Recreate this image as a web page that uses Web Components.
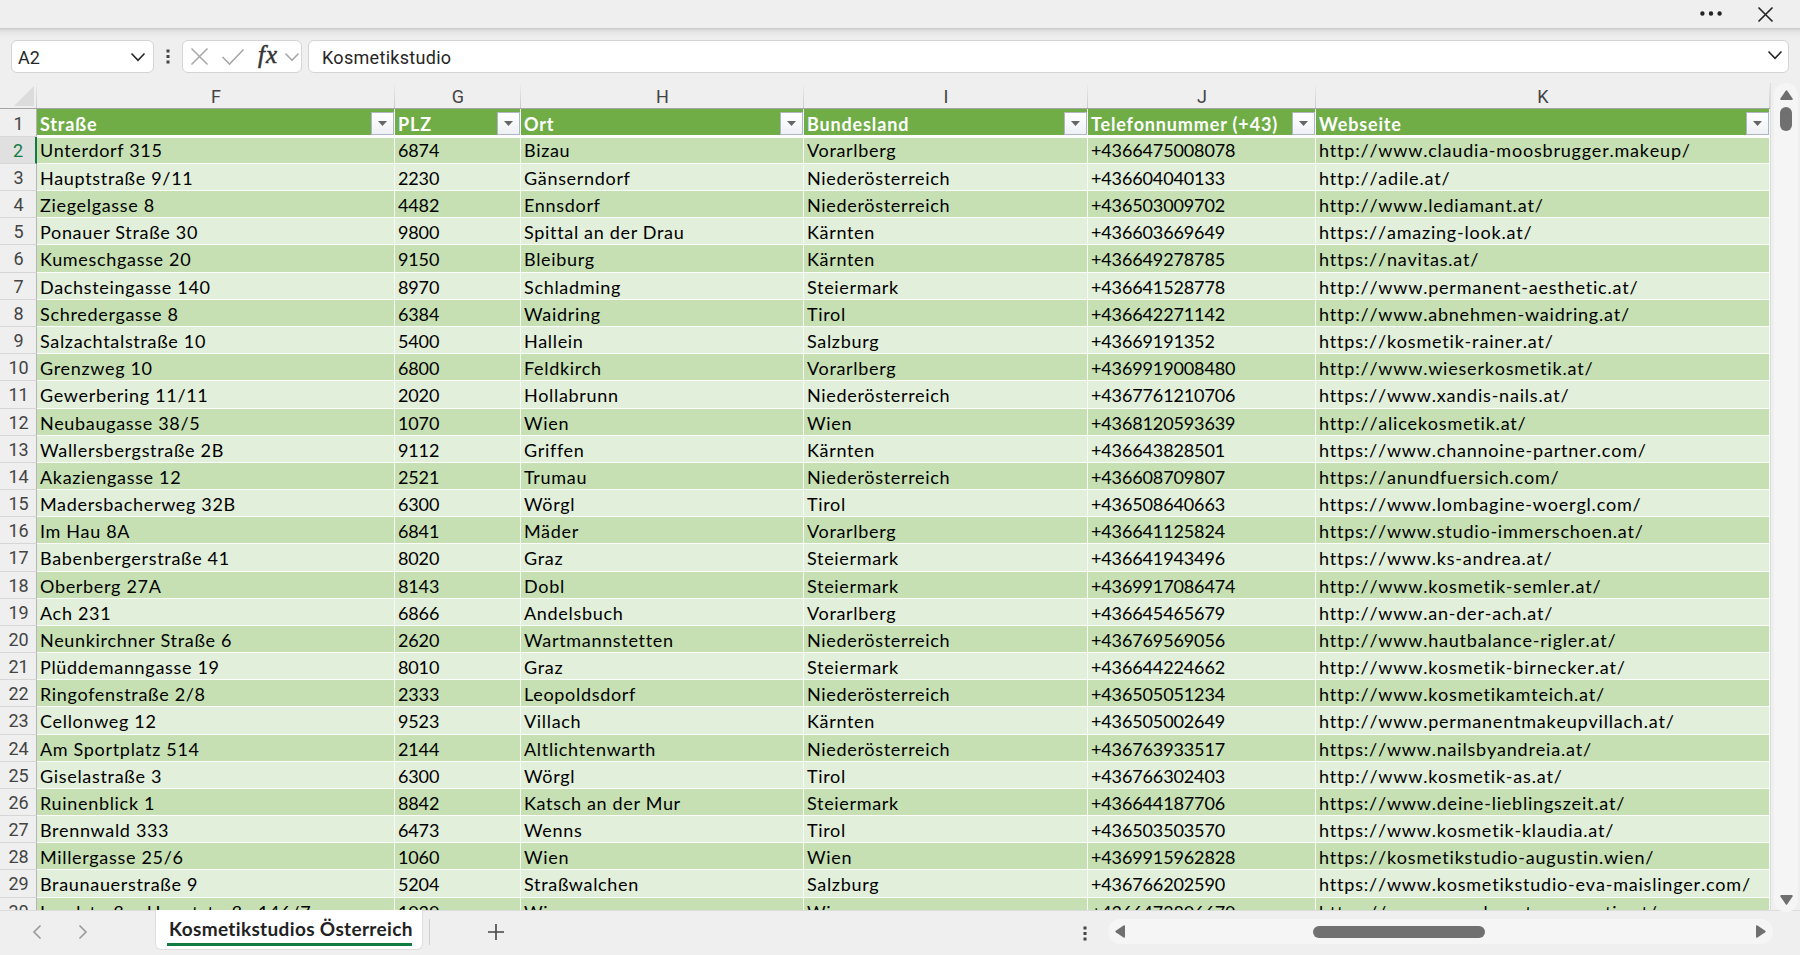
<!DOCTYPE html>
<html lang="de">
<head>
<meta charset="utf-8">
<title>Kosmetikstudios Österreich</title>
<style>
  body {
    margin: 0;
    height: 955px;
    overflow: hidden;
    background: #efefef;
  }
</style>
</head>
<body>
<sheet-app></sheet-app>

<script>
const COLUMNS = [
  { letter: 'F', title: 'Straße' },
  { letter: 'G', title: 'PLZ' },
  { letter: 'H', title: 'Ort' },
  { letter: 'I', title: 'Bundesland' },
  { letter: 'J', title: 'Telefonnummer (+43)' },
  { letter: 'K', title: 'Webseite' },
];

const ROWS = `
Unterdorf 315|6874|Bizau|Vorarlberg|+4366475008078|http://www.claudia-moosbrugger.makeup/
Hauptstraße 9/11|2230|Gänserndorf|Niederösterreich|+436604040133|http://adile.at/
Ziegelgasse 8|4482|Ennsdorf|Niederösterreich|+436503009702|http://www.lediamant.at/
Ponauer Straße 30|9800|Spittal an der Drau|Kärnten|+436603669649|https://amazing-look.at/
Kumeschgasse 20|9150|Bleiburg|Kärnten|+436649278785|https://navitas.at/
Dachsteingasse 140|8970|Schladming|Steiermark|+436641528778|http://www.permanent-aesthetic.at/
Schredergasse 8|6384|Waidring|Tirol|+436642271142|http://www.abnehmen-waidring.at/
Salzachtalstraße 10|5400|Hallein|Salzburg|+43669191352|https://kosmetik-rainer.at/
Grenzweg 10|6800|Feldkirch|Vorarlberg|+4369919008480|http://www.wieserkosmetik.at/
Gewerbering 11/11|2020|Hollabrunn|Niederösterreich|+4367761210706|https://www.xandis-nails.at/
Neubaugasse 38/5|1070|Wien|Wien|+4368120593639|http://alicekosmetik.at/
Wallersbergstraße 2B|9112|Griffen|Kärnten|+436643828501|https://www.channoine-partner.com/
Akaziengasse 12|2521|Trumau|Niederösterreich|+436608709807|https://anundfuersich.com/
Madersbacherweg 32B|6300|Wörgl|Tirol|+436508640663|https://www.lombagine-woergl.com/
Im Hau 8A|6841|Mäder|Vorarlberg|+436641125824|https://www.studio-immerschoen.at/
Babenbergerstraße 41|8020|Graz|Steiermark|+436641943496|https://www.ks-andrea.at/
Oberberg 27A|8143|Dobl|Steiermark|+4369917086474|http://www.kosmetik-semler.at/
Ach 231|6866|Andelsbuch|Vorarlberg|+436645465679|http://www.an-der-ach.at/
Neunkirchner Straße 6|2620|Wartmannstetten|Niederösterreich|+436769569056|http://www.hautbalance-rigler.at/
Plüddemanngasse 19|8010|Graz|Steiermark|+436644224662|http://www.kosmetik-birnecker.at/
Ringofenstraße 2/8|2333|Leopoldsdorf|Niederösterreich|+436505051234|http://www.kosmetikamteich.at/
Cellonweg 12|9523|Villach|Kärnten|+436505002649|http://www.permanentmakeupvillach.at/
Am Sportplatz 514|2144|Altlichtenwarth|Niederösterreich|+436763933517|https://www.nailsbyandreia.at/
Giselastraße 3|6300|Wörgl|Tirol|+436766302403|http://www.kosmetik-as.at/
Ruinenblick 1|8842|Katsch an der Mur|Steiermark|+436644187706|https://www.deine-lieblingszeit.at/
Brennwald 333|6473|Wenns|Tirol|+436503503570|https://www.kosmetik-klaudia.at/
Millergasse 25/6|1060|Wien|Wien|+4369915962828|https://kosmetikstudio-augustin.wien/
Braunauerstraße 9|5204|Straßwalchen|Salzburg|+436766202590|https://www.kosmetikstudio-eva-maislinger.com/
Landstraßer Hauptstraße 146/7|1030|Wien|Wien|+4366473806670|https://www.pure-beauty-cosmetic.at/
`.trim().split('\n').map(line => line.split('|'));

// Stroke and fill icons, drawn in their own viewBox
const ICONS = {
  chevron: { w: 14, h: 8, d: 'M.5.5l6.500 6.800L13.500.5' },
  left: { w: 8, h: 14, d: 'M7.500.5L1 7l6.500 6.500' },
  right: { w: 8, h: 14, d: 'M.5.5L7 7 .5 13.500' },
  cancel: { w: 17, h: 17, d: 'M.5.5l16 16M16.500.5l-16 16' },
  check: { w: 22, h: 16, d: 'M.5 8l7 7L21.500.5' },
  close: { w: 15, h: 15, d: 'M.5.5l14 14M14.500.5l-14 14' },
  plus: { w: 16, h: 16, d: 'M8 0v16M0 8h16' },
  dotsH: { w: 22, h: 5, fill: true, d: 'M.2 2.500a2.200 2.200 0 104.400 0 2.200 2.200 0 10-4.400 0M8.800 2.500a2.200 2.200 0 104.400 0 2.200 2.200 0 10-4.400 0M17.400 2.500a2.200 2.200 0 104.400 0 2.200 2.200 0 10-4.400 0' },
  dotsV: { w: 4, h: 15, fill: true, d: 'M.5.5h3v3h-3zM.5 6h3v3h-3zM.5 11.500h3v3h-3z' },
  triUp: { w: 13, h: 10, fill: true, d: 'M5.700.8Q6.500-.2 7.300.8L12.600 8.500Q13 10 12 10H1Q0 10 .4 8.500z' },
  triDown: { w: 13, h: 10, fill: true, d: 'M5.700 9.200Q6.500 10.200 7.300 9.200L12.600 1.500Q13 0 12 0H1Q0 0 .4 1.500z' },
  triLeft: { w: 10, h: 13, fill: true, d: 'M.8 5.700Q-.2 6.500.8 7.300L8.500 12.600Q10 13 10 12V1Q10 0 8.500.4z' },
  triRight: { w: 10, h: 13, fill: true, d: 'M9.200 5.700Q10.200 6.500 9.200 7.300L1.500 12.600Q0 13 0 12V1Q0 0 1.500.4z' },
  filter: { w: 9, h: 5, fill: true, d: 'M0 0h9L4.500 5z' },
};

class SheetIcon extends HTMLElement {
  constructor() {
    super();
    this.attachShadow({ mode: 'open' });
  }

  connectedCallback() {
    const icon = ICONS[this.getAttribute('name')];
    const paint = icon.fill
      ? 'fill="currentColor"'
      : 'fill="none" stroke="currentColor" stroke-width="1.600"';
    this.shadowRoot.innerHTML = `
      <style>
        :host { display: block; flex: none; }
        svg { display: block; overflow: visible; }
      </style>
      <svg width="${icon.w}" height="${icon.h}" viewBox="0 0 ${icon.w} ${icon.h}"><path ${paint} d="${icon.d}"/></svg>
    `;
  }
}

const titleTemplate = document.createElement('template');
titleTemplate.innerHTML = `
  <style>
    :host {
      display: flex;
      box-sizing: border-box;
      height: 28px;
      justify-content: flex-end;
      align-items: center;
      gap: 36px;
      padding-right: 27px;
      color: #222;
    }
    .more { padding-bottom: 1px; }
  </style>
  <sheet-icon class="more" name="dotsH"></sheet-icon>
  <sheet-icon name="close"></sheet-icon>
`;

class TitleStrip extends HTMLElement {
  constructor() {
    super();
    this.attachShadow({ mode: 'open' });
    this.shadowRoot.appendChild(titleTemplate.content.cloneNode(true));
  }
}

const formulaTemplate = document.createElement('template');
formulaTemplate.innerHTML = `
  <style>
    :host {
      display: flex;
      box-sizing: border-box;
      height: 55px;
      padding: 11px 11px 11px 11px;
      border-top: 1px solid #cbcbcb;
      background: linear-gradient(#d4d4d4, #e6e6e6 3px, #efefef 9px);
      font: 18px Roboto, sans-serif;
      color: #262626;
    }
    .box {
      display: flex;
      box-sizing: border-box;
      height: 33px;
      align-items: center;
      border: 1px solid #d4d4d4;
      border-radius: 6px;
      background: #fff;
    }
    .name { width: 143px; padding: 0 8px 0 6px; justify-content: space-between; }
    .dots { align-self: center; margin: 0 12px 0 12px; color: #444; }
    .tools { width: 120px; padding-left: 8px; color: #a8a8a8; }
    .tools .check { margin-left: 14px; }
    .fx {
      margin-left: 14px;
      width: 22px;
      padding-bottom: 3px;
      font: italic 25px/28px "Liberation Serif", serif;
      -webkit-text-stroke: .5px #333;
      letter-spacing: 1px;
      color: #333;
    }
    .tools .more { margin-left: 5px; }
    .formula { flex: 1; margin-left: 6px; padding: 0 6px 0 13px; justify-content: space-between; }
    .formula .text { letter-spacing: .3px; }
    .formula sheet-icon { padding-bottom: 3px; }
    .name slot, .text { display: block; padding-top: 1px; }
  </style>
  <div class="box name"><slot name="cell"></slot><sheet-icon name="chevron"></sheet-icon></div>
  <sheet-icon class="dots" name="dotsV"></sheet-icon>
  <div class="box tools">
    <sheet-icon name="cancel"></sheet-icon>
    <sheet-icon class="check" name="check"></sheet-icon>
    <span class="fx">fx</span>
    <sheet-icon class="more" name="chevron"></sheet-icon>
  </div>
  <div class="box formula"><span class="text"><slot></slot></span><sheet-icon name="chevron"></sheet-icon></div>
`;

class FormulaBar extends HTMLElement {
  constructor() {
    super();
    this.attachShadow({ mode: 'open' });
    this.shadowRoot.appendChild(formulaTemplate.content.cloneNode(true));
  }
}

const gridTemplate = document.createElement('template');
gridTemplate.innerHTML = `
  <style>
    :host {
      display: block;
      height: 827px;
      overflow: hidden;
      font: 18px Lato, sans-serif;
      font-variant-ligatures: none;
      color: #000;
    }
    .row {
      display: grid;
      grid-template-columns: 37px 358px 126px 283px 284px 228px 454px;
      height: 27.18px;
      line-height: 28.200px;
      white-space: nowrap;
    }
    .row > div { box-sizing: border-box; overflow: hidden; }
    .letters { height: 26px; border-bottom: 1px solid #a5a5a5; box-sizing: border-box; font: 18px/28px Roboto, sans-serif; color: #444; text-align: center; }
    .letters > div {
      padding-left: 1px;
      border-right: 1px solid;
      border-image: linear-gradient(#efefef, #c8c8c8) 1;
    }
    .row > .corner { display: flex; justify-content: flex-end; align-items: flex-end; padding: 0 2px 2px 0; }
    .corner svg { display: block; }
    .num {
      padding-left: 1px;
      border-right: 1px solid #b5b5b5;
      border-bottom: 1px solid #d6d6d6;
      font-family: Roboto, sans-serif;
      font-size: 18px;
      color: #444;
      text-align: center;
    }
    .num.current { border-right: 2px solid #107c41; background: #e0e0e0; color: #107c41; }
    .cell {
      padding-left: 3px;
      border-right: 1px solid #f7fbf5;
      border-bottom: 1px solid #fbfdfa;
      background: #e2efda;
      letter-spacing: .68px;
    }
    .cell.number { letter-spacing: -.13px; }
    .cell.link { letter-spacing: .79px; font-kerning: none; }
    .dark .cell { background: #c6e0b4; }
    .head { height: 27.800px; line-height: 30px; }
    .head .cell {
      display: flex;
      justify-content: space-between;
      border-bottom: 2px solid #fff;
      background: #70ad47;
      font-weight: 700;
      letter-spacing: .85px;
      color: #fff;
    }
    .button {
      display: flex;
      box-sizing: border-box;
      width: 23px;
      height: 23px;
      margin-top: 3px;
      align-items: center;
      justify-content: center;
      border: 1px solid #adb5c6;
      background: linear-gradient(#fff, #eef1f5);
      color: #666;
    }
    .first .cell { border-top: 1px solid #fff; line-height: 25.600px; }
  </style>
  <div class="row letters">
    <div class="corner"><svg width="20" height="20"><path d="M20 0v20H0z" fill="#dcdcdc"/></svg></div>
  </div>
  <div class="row head"><div class="num">1</div></div>
`;

class SheetGrid extends HTMLElement {
  constructor() {
    super();
    this.attachShadow({ mode: 'open' });
    this.shadowRoot.appendChild(gridTemplate.content.cloneNode(true));

    const letters = this.shadowRoot.querySelector('.letters');
    const head = this.shadowRoot.querySelector('.head');
    COLUMNS.forEach(column => {
      letters.insertAdjacentHTML('beforeend', `<div>${column.letter}</div>`);
      head.insertAdjacentHTML('beforeend', `
        <div class="cell"><span>${column.title}</span><span class="button"><sheet-icon name="filter"></sheet-icon></span></div>
      `);
    });

    ROWS.forEach((row, i) => {
      const el = document.createElement('div');
      el.className = 'row' + (i % 2 ? '' : ' dark') + (i ? '' : ' first');
      el.innerHTML = `<div class="num${i ? '' : ' current'}">${i + 2}</div>`
        + row.map(text => `<div class="cell${this.kind(text)}">${text}</div>`).join('');
      this.shadowRoot.appendChild(el);
    });
  }

  kind(text) {
    if (text.startsWith('http')) return ' link';
    return /^[+\d]+$/.test(text) ? ' number' : '';
  }
}

const scrollTemplate = document.createElement('template');
scrollTemplate.innerHTML = `
  <style>
    :host {
      display: flex;
      box-sizing: border-box;
      align-items: center;
      border-radius: 12px;
      background: #f5f5f5;
      color: #6f6f6f;
    }
    :host([vertical]) { flex-direction: column; width: 24px; padding: 7px 0; }
    :host(:not([vertical])) { height: 25px; padding: 0 7px; }
    .thumb { border-radius: 6px; background: #707070; }
    :host([vertical]) .thumb { width: 12px; height: 24px; margin-top: 7px; }
    :host(:not([vertical])) .thumb { width: 172px; height: 12px; margin-left: 188px; }
    .space { flex: 1; }
  </style>
  <sheet-icon class="start"></sheet-icon>
  <div class="thumb"></div>
  <div class="space"></div>
  <sheet-icon class="end"></sheet-icon>
`;

class ScrollTrack extends HTMLElement {
  constructor() {
    super();
    this.attachShadow({ mode: 'open' });
    const content = scrollTemplate.content.cloneNode(true);
    const vertical = this.hasAttribute('vertical');
    content.querySelector('.start').setAttribute('name', vertical ? 'triUp' : 'triLeft');
    content.querySelector('.end').setAttribute('name', vertical ? 'triDown' : 'triRight');
    this.shadowRoot.appendChild(content);
  }
}

const tabsTemplate = document.createElement('template');
tabsTemplate.innerHTML = `
  <style>
    :host {
      display: flex;
      box-sizing: border-box;
      height: 45px;
      align-items: flex-start;
      border-top: 1px solid #dcdcdc;
      background: #efefef;
      color: #999;
    }
    .prev { margin: 14px 0 0 33px; }
    .next { margin: 14px 0 0 38px; }
    .tab {
      box-sizing: border-box;
      width: 268px;
      height: 40px;
      margin: -1px 0 0 68px;
      padding: 6px 10px 0 11px;
      border: 1px solid #dedede;
      border-top: 0;
      border-radius: 0 0 6px 6px;
      background: #fff;
      font: 700 19px/26px Lato, sans-serif;
      font-variant-ligatures: none;
      letter-spacing: .35px;
      color: #222;
      white-space: nowrap;
    }
    .label { display: block; padding: 0 0 1px 2px; border-bottom: 3px solid #107c41; }
    .line { width: 1px; height: 26px; margin: 8px 0 0 6px; background: #d0d0d0; }
    .plus { margin: 13px 0 0 58px; color: #444; }
    .dots { margin: 15px 21px 0 auto; color: #444; }
    scroll-track { width: 665px; margin: 8px 27px 0 0; }
  </style>
  <sheet-icon class="prev" name="left"></sheet-icon>
  <sheet-icon class="next" name="right"></sheet-icon>
  <div class="tab"><span class="label"><slot></slot></span></div>
  <div class="line"></div>
  <sheet-icon class="plus" name="plus"></sheet-icon>
  <sheet-icon class="dots" name="dotsV"></sheet-icon>
  <scroll-track></scroll-track>
`;

class SheetTabs extends HTMLElement {
  constructor() {
    super();
    this.attachShadow({ mode: 'open' });
    this.shadowRoot.appendChild(tabsTemplate.content.cloneNode(true));
  }
}

const appTemplate = document.createElement('template');
appTemplate.innerHTML = `
  <style>
    :host { display: block; width: 1800px; height: 955px; overflow: hidden; }
    .main { display: flex; gap: 3px; height: 827px; }
    sheet-grid { width: 1770px; border-right: 1px solid #dcdcdc; }
    .main scroll-track { height: 829px; }
    sheet-tabs { width: 1800px; }
  </style>
  <title-strip></title-strip>
  <formula-bar><span slot="cell">A2</span>Kosmetikstudio</formula-bar>
  <div class="main">
    <sheet-grid></sheet-grid>
    <scroll-track vertical></scroll-track>
  </div>
  <sheet-tabs>Kosmetikstudios Österreich</sheet-tabs>
`;

class SheetApp extends HTMLElement {
  constructor() {
    super();
    this.attachShadow({ mode: 'open' });
    this.shadowRoot.appendChild(appTemplate.content.cloneNode(true));
  }
}

customElements.define('sheet-icon', SheetIcon);
customElements.define('title-strip', TitleStrip);
customElements.define('formula-bar', FormulaBar);
customElements.define('sheet-grid', SheetGrid);
customElements.define('scroll-track', ScrollTrack);
customElements.define('sheet-tabs', SheetTabs);
customElements.define('sheet-app', SheetApp);
</script>
</body>
</html>
